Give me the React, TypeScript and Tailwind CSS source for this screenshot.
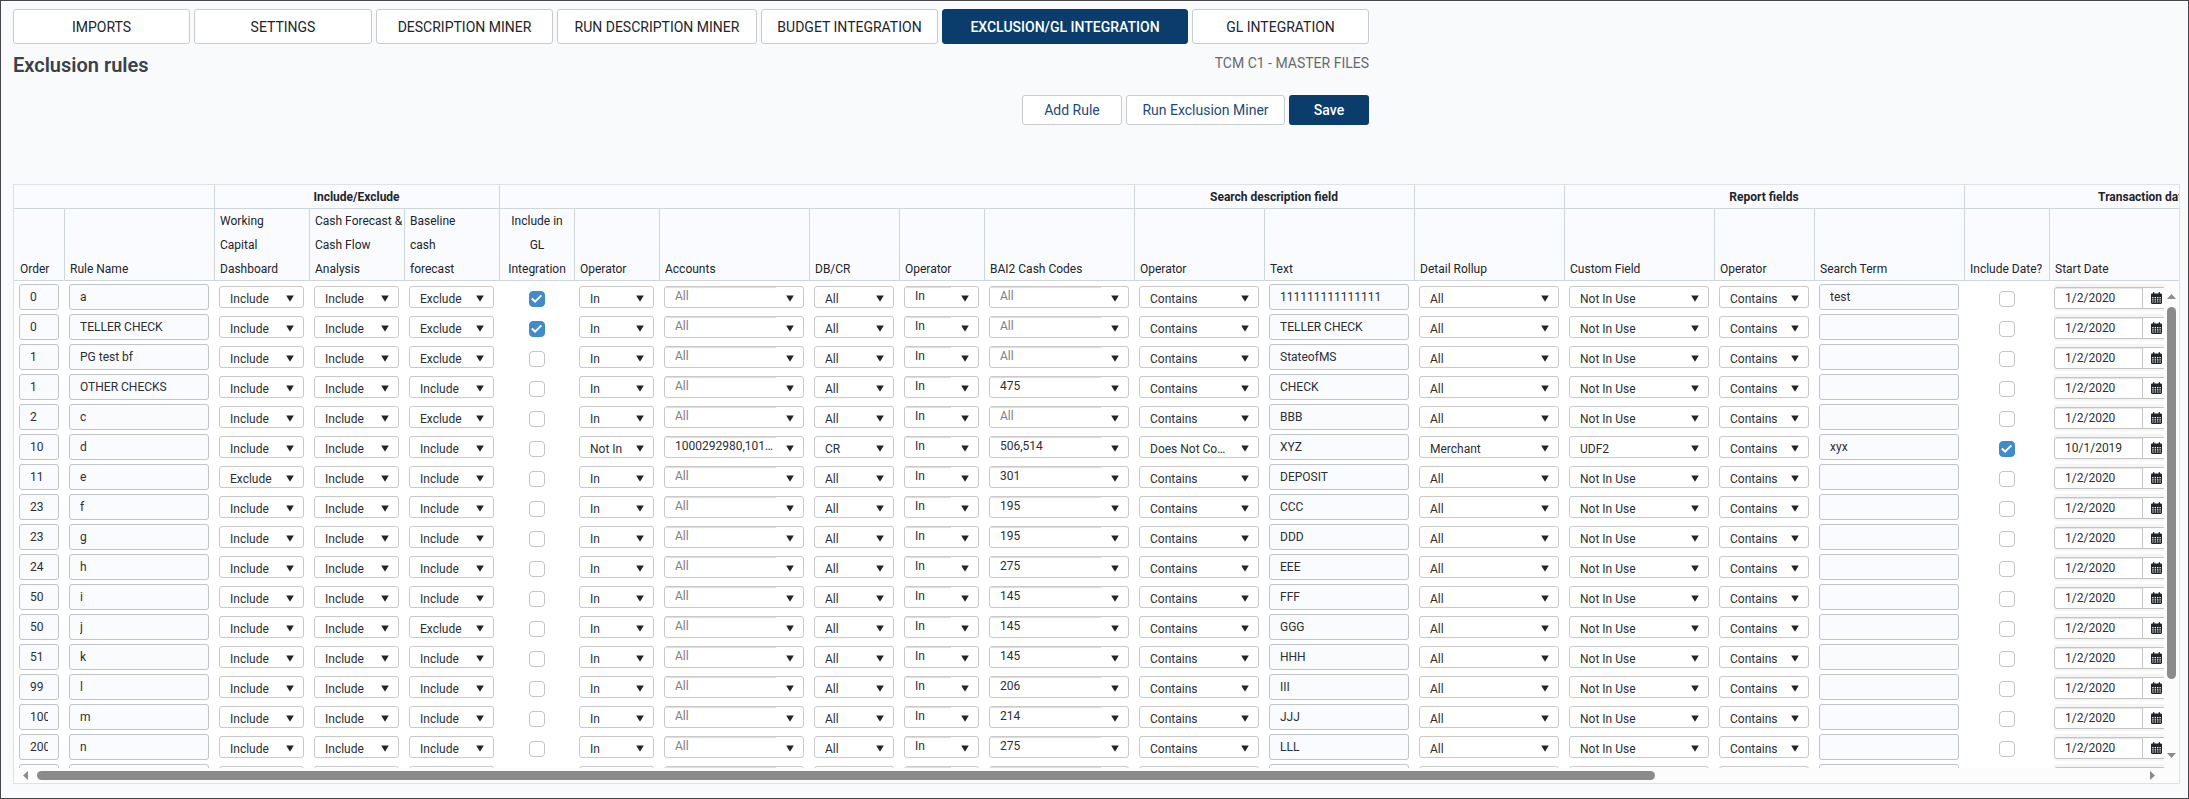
import { useState } from "react";

type Rule = {
  order: string;
  name: string;
  working?: string;
  baseline?: string;
  gl?: boolean;
  accountOp?: string;
  accounts?: string;
  dbcr?: string;
  codes?: string;
  textOp?: string;
  text: string;
  rollup?: string;
  custom?: string;
  term?: string;
  useDate?: boolean;
  start?: string;
};

const rules: Rule[] = [
  { order: "0", name: "a", baseline: "Exclude", gl: true, text: "111111111111111", term: "test" },
  { order: "0", name: "TELLER CHECK", baseline: "Exclude", gl: true, text: "TELLER CHECK" },
  { order: "1", name: "PG test bf", baseline: "Exclude", text: "StateofMS" },
  { order: "1", name: "OTHER CHECKS", codes: "475", text: "CHECK" },
  { order: "2", name: "c", baseline: "Exclude", text: "BBB" },
  {
    order: "10",
    name: "d",
    accountOp: "Not In",
    accounts: "1000292980,1010292980",
    dbcr: "CR",
    codes: "506,514",
    textOp: "Does Not Contain",
    text: "XYZ",
    rollup: "Merchant",
    custom: "UDF2",
    term: "xyx",
    useDate: true,
    start: "10/1/2019",
  },
  { order: "11", name: "e", working: "Exclude", codes: "301", text: "DEPOSIT" },
  { order: "23", name: "f", codes: "195", text: "CCC" },
  { order: "23", name: "g", codes: "195", text: "DDD" },
  { order: "24", name: "h", codes: "275", text: "EEE" },
  { order: "50", name: "i", codes: "145", text: "FFF" },
  { order: "50", name: "j", baseline: "Exclude", codes: "145", text: "GGG" },
  { order: "51", name: "k", codes: "145", text: "HHH" },
  { order: "99", name: "l", codes: "206", text: "III" },
  { order: "100", name: "m", codes: "214", text: "JJJ" },
  { order: "200", name: "n", codes: "275", text: "LLL" },
  { order: "", name: "", text: "" },
];

const tabs = [
  { label: "IMPORTS", width: "w-[177px]" },
  { label: "SETTINGS", width: "w-[178px]" },
  { label: "DESCRIPTION MINER", width: "w-[177px]" },
  { label: "RUN DESCRIPTION MINER", width: "w-[200px]" },
  { label: "BUDGET INTEGRATION", width: "w-[177px]" },
  { label: "EXCLUSION/GL INTEGRATION", width: "w-[246px]" },
  { label: "GL INTEGRATION", width: "w-[177px]" },
];

const groups = [
  { label: "", span: 2 },
  { label: "Include/Exclude", span: 3 },
  { label: "", span: 6 },
  { label: "Search description field", span: 2 },
  { label: "", span: 1 },
  { label: "Report fields", span: 3 },
  { label: "Transaction dates", span: 3 },
];

const columns = [
  { label: "Order", width: "w-[50px]" },
  { label: "Rule Name", width: "w-[150px]" },
  { label: "Working\nCapital\nDashboard", width: "w-[95px]" },
  { label: "Cash Forecast &\nCash Flow\nAnalysis", width: "w-[95px]" },
  { label: "Baseline\ncash\nforecast", width: "w-[95px]" },
  { label: "Include in\nGL\nIntegration", width: "w-[75px]", center: true },
  { label: "Operator", width: "w-[85px]" },
  { label: "Accounts", width: "w-[150px]" },
  { label: "DB/CR", width: "w-[90px]" },
  { label: "Operator", width: "w-[85px]" },
  { label: "BAI2 Cash Codes", width: "w-[150px]" },
  { label: "Operator", width: "w-[130px]" },
  { label: "Text", width: "w-[150px]" },
  { label: "Detail Rollup", width: "w-[150px]" },
  { label: "Custom Field", width: "w-[150px]" },
  { label: "Operator", width: "w-[100px]" },
  { label: "Search Term", width: "w-[150px]" },
  { label: "Include Date?", width: "w-[85px]" },
  { label: "Start Date", width: "w-[140px]" },
  { label: "", width: "w-[140px]" },
];

function Columns() {
  return (
    <colgroup>
      {columns.map((c, i) => (
        <col key={i} className={c.width} />
      ))}
    </colgroup>
  );
}

function ArrowShape() {
  return <path d="M0.200 0.400h7.600L4 6.800z" fill="#212529" />;
}

function TextCell({ label, value }: { label: string; value: string }) {
  return (
    <td className="h-[30px] px-[5px] pt-[3px] pb-px align-top">
      <input
        aria-label={label}
        defaultValue={value}
        className="block h-[26px] w-full rounded-[3px] border border-[#bfc4cb] bg-[#fafbff] px-2.5 text-[#2b2f33] outline-none"
      />
    </td>
  );
}

function SelectCell({ label, value, options }: { label: string; value: string; options: string[] }) {
  return (
    <td className="h-[30px] px-[5px] pt-[5px] align-top">
      <div className="relative h-[22px]">
        <select
          aria-label={label}
          defaultValue={value}
          className="block h-[22px] w-full appearance-none truncate rounded-[3px] border border-[#c9c9c9] bg-white pt-[3px] pr-[28px] pl-2.5 leading-4 text-[#2b2f33] outline-none"
        >
          {options.map((o) => (
            <option key={o}>{o}</option>
          ))}
        </select>
        <svg
          className="pointer-events-none absolute top-[9px] right-[10px]"
          width="8"
          height="7"
          viewBox="0 0 8 7"
          aria-hidden="true"
        >
          <ArrowShape />
        </svg>
      </div>
    </td>
  );
}

function ComboCell({ label, value }: { label: string; value: string }) {
  return (
    <td className="h-[30px] px-[5px] pt-[5px] align-top">
      <div className="flex h-[22px] overflow-hidden rounded-[3px] border border-[#c9c9c9] bg-white">
        <input
          aria-label={label}
          defaultValue={value}
          placeholder="All"
          className="h-[20px] min-w-0 flex-1 pb-[2px] pl-2.5 text-ellipsis text-[#2b2f33] shadow-[inset_0_2px_1px_-1px_#dcdcdc] outline-none placeholder:text-[#7f7f7f]"
        />
        <button type="button" aria-label={`Open ${label}`} className="flex w-[27px] justify-end pt-2 pr-[9px]">
          <svg width="8" height="7" viewBox="0 0 8 7" aria-hidden="true">
            <ArrowShape />
          </svg>
        </button>
      </div>
    </td>
  );
}

function CheckCell({ label, value }: { label: string; value: boolean }) {
  return (
    <td className="h-[30px] pt-[10px] align-top">
      <div className="relative mx-auto size-4">
        <input
          type="checkbox"
          aria-label={label}
          defaultChecked={value}
          className="peer block size-4 appearance-none rounded-[4px] border border-[#c4c4c4] bg-white checked:border-[#428bca] checked:bg-[#428bca]"
        />
        <svg
          className="pointer-events-none absolute inset-0 hidden peer-checked:block"
          width="16"
          height="16"
          viewBox="0 0 16 16"
          aria-hidden="true"
        >
          <path d="M2.800 7.600l3.300 3 6.300-6.200" fill="none" stroke="#fff" strokeWidth="2" />
        </svg>
      </div>
    </td>
  );
}

function DateCell({ label, value }: { label: string; value: string }) {
  return (
    <td className="h-[30px] px-[5px] pt-[3px] align-top">
      <div className="h-[27px] rounded-[3px] bg-[#f5f5f5] pt-[3px]">
        <div className="flex h-[22px] overflow-hidden rounded-[3px] border border-[#c4c4c4] bg-white">
          <input
            aria-label={label}
            defaultValue={value}
            className="h-[20px] w-[87px] shrink-0 pl-2.5 text-[#2b2f33] shadow-[inset_0_2px_1px_-1px_#e4e4e4] outline-none"
          />
          <button
            type="button"
            aria-label={`Pick ${label}`}
            className="flex flex-1 items-center border-l border-[#c4c4c4] pl-2"
          >
            <svg width="11" height="12" viewBox="0 0 11 12" aria-hidden="true">
              <path
                d="M0 2.600C0 1.900.5 1.400 1.200 1.400H2V.6C2 .3 2.300 0 2.700 0s.7.3.7.6v.8h4.200V.6c0-.3.3-.6.7-.6s.7.3.7.6v.8h.8c.7 0 1.200.5 1.200 1.200v8.200c0 .7-.5 1.200-1.200 1.200H1.200C.5 12 0 11.500 0 10.800z"
                fill="#212529"
              />
              <path
                d="M1.200 5h1.300v1.200H1.200zM3.700 5h1.300v1.200H3.700zM6.100 5h1.300v1.200H6.100zM8.500 5h1.300v1.200H8.500zM1.200 7.200h1.300v1.200H1.200zM3.700 7.200h1.300v1.200H3.700zM6.100 7.200h1.300v1.200H6.100zM8.500 7.200h1.300v1.200H8.500zM1.200 9.400h1.300v1.200H1.200zM3.700 9.400h1.300v1.200H3.700zM6.100 9.400h1.300v1.200H6.100zM8.500 9.400h1.300v1.200H8.500z"
                fill="#fff"
              />
            </svg>
          </button>
        </div>
      </div>
    </td>
  );
}

const includeOptions = ["Include", "Exclude"];
const inOptions = ["In", "Not In"];
const containsOptions = ["Contains", "Does Not Contain"];

export default function App() {
  const [active, setActive] = useState("EXCLUSION/GL INTEGRATION");

  return (
    <div className="flex h-screen flex-col border border-[#43454a] bg-[#f9fafc] pt-2 pr-2 pb-[14px] pl-3 font-[Roboto,'Liberation_Sans',sans-serif] text-xs text-[#212529]">
      <div className="w-[1356px] max-w-full">
        <nav className="flex gap-1" aria-label="Sections">
          {tabs.map((t) => (
            <button
              key={t.label}
              type="button"
              onClick={() => setActive(t.label)}
              className={`${t.width} h-[35px] rounded-[3px] border text-sm whitespace-nowrap ${
                active === t.label
                  ? "border-[#0a3d6b] bg-[#0a3d6b] font-medium text-white"
                  : "border-[#c9cbce] bg-white text-[#212529]"
              }`}
            >
              {t.label}
            </button>
          ))}
        </nav>
        <header className="flex items-start justify-between pt-[7px]">
          <h1 className="text-xl leading-7 font-semibold text-[#3a4149]">Exclusion rules</h1>
          <p className="text-sm leading-6 text-[#666a6e]">TCM C1 - MASTER FILES</p>
        </header>
        <div className="flex justify-end gap-1 pt-4 text-sm">
          <button type="button" className="h-[30px] w-[100px] rounded-[3px] border border-[#c9cbce] bg-white text-[#1c4a78]">
            Add Rule
          </button>
          <button type="button" className="h-[30px] w-[159px] rounded-[3px] border border-[#c9cbce] bg-white text-[#1c4a78]">
            Run Exclusion Miner
          </button>
          <button type="button" className="h-[30px] w-[80px] rounded-[3px] bg-[#0a3d6b] font-medium text-white">
            Save
          </button>
        </div>
      </div>

      <main className="mt-[59px] flex min-h-0 flex-1 flex-col overflow-hidden border border-[#dee2e6] bg-white">
        <div className="overflow-hidden bg-[#fafbff]">
          <table className="w-[2275px] table-fixed border-separate border-spacing-0">
            <Columns />
            <thead>
              <tr>
                {groups.map((g, i) => (
                  <th
                    key={i}
                    colSpan={g.span}
                    scope="colgroup"
                    className={`h-6 p-0 leading-6 font-bold ${
                      i === 0 ? "shadow-[inset_0_-1px_0_#ced6dc]" : "shadow-[inset_1px_-1px_0_#ced6dc]"
                    }`}
                  >
                    {g.label}
                  </th>
                ))}
              </tr>
              <tr>
                {columns.map((c, i) => (
                  <th
                    key={i}
                    scope="col"
                    className={`h-[72px] py-0 pl-[6px] align-bottom leading-6 font-normal whitespace-pre ${
                      c.center ? "pr-[5px] text-center" : "pr-0 text-left"
                    } ${i === 0 ? "shadow-[inset_0_-1px_0_#ced6dc]" : "shadow-[inset_1px_-1px_0_#ced6dc]"}`}
                  >
                    {c.label}
                  </th>
                ))}
              </tr>
            </thead>
          </table>
        </div>

        <div className="flex min-h-0 flex-1">
          <div className="min-w-0 flex-1 overflow-hidden">
            <table className="w-[2275px] table-fixed border-separate border-spacing-0" aria-label="Exclusion rules">
              <Columns />
              <tbody>
                {rules.map((r, i) => (
                  <tr key={i}>
                    <TextCell label="Order" value={r.order} />
                    <TextCell label="Rule Name" value={r.name} />
                    <SelectCell label="Working Capital Dashboard" value={r.working ?? "Include"} options={includeOptions} />
                    <SelectCell label="Cash Forecast & Cash Flow Analysis" value="Include" options={includeOptions} />
                    <SelectCell label="Baseline cash forecast" value={r.baseline ?? "Include"} options={includeOptions} />
                    <CheckCell label="Include in GL Integration" value={!!r.gl} />
                    <SelectCell label="Accounts Operator" value={r.accountOp ?? "In"} options={inOptions} />
                    <ComboCell label="Accounts" value={r.accounts ?? ""} />
                    <SelectCell label="DB/CR" value={r.dbcr ?? "All"} options={["All", "DB", "CR"]} />
                    <ComboCell label="Cash Codes Operator" value="In" />
                    <ComboCell label="BAI2 Cash Codes" value={r.codes ?? ""} />
                    <SelectCell label="Text Operator" value={r.textOp ?? "Contains"} options={containsOptions} />
                    <TextCell label="Text" value={r.text} />
                    <SelectCell label="Detail Rollup" value={r.rollup ?? "All"} options={["All", "Merchant"]} />
                    <SelectCell label="Custom Field" value={r.custom ?? "Not In Use"} options={["Not In Use", "UDF1", "UDF2"]} />
                    <SelectCell label="Custom Field Operator" value="Contains" options={containsOptions} />
                    <TextCell label="Search Term" value={r.term ?? ""} />
                    <CheckCell label="Include Date?" value={!!r.useDate} />
                    <DateCell label="Start Date" value={r.start ?? "1/2/2020"} />
                    <td />
                  </tr>
                ))}
              </tbody>
            </table>
          </div>
          <div className="flex w-[15px] flex-col items-center bg-[#fcfcfc] pt-[13px] pb-[10px]" aria-hidden="true">
            <svg width="9" height="5" viewBox="0 0 9 5">
              <path d="M4.500 0L9 5H0z" fill="#8b8b8b" />
            </svg>
            <div className="mt-2 w-[9px] flex-[373] rounded-full bg-[#8b8b8b]" />
            <div className="flex-[74]" />
            <svg width="9" height="5" viewBox="0 0 9 5">
              <path d="M0 0h9L4.500 5z" fill="#8b8b8b" />
            </svg>
          </div>
        </div>
        <div className="flex h-[15px] items-center bg-[#fcfcfc] pr-[24px] pl-[9px]" aria-hidden="true">
          <svg width="5" height="9" viewBox="0 0 5 9">
            <path d="M5 0v9L0 4.500z" fill="#8b8b8b" />
          </svg>
          <div className="ml-[9px] h-[9px] flex-[1618] rounded-full bg-[#8b8b8b]" />
          <div className="flex-[495]" />
          <svg width="5" height="9" viewBox="0 0 5 9">
            <path d="M0 0l5 4.500L0 9z" fill="#8b8b8b" />
          </svg>
        </div>
      </main>
    </div>
  );
}
